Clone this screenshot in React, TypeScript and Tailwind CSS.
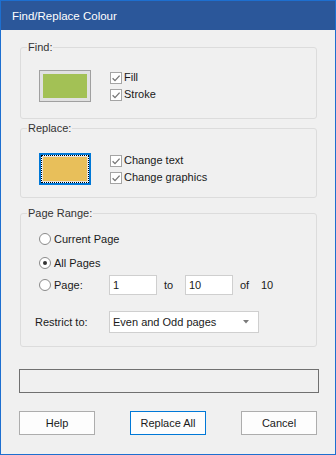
import React from "react";

function Check({ label }: { label: string }) {
  return (
    <div className="flex items-center h-[17px] gap-[2px]">
      <div className="w-[12px] h-[12px] border border-[#a4a4a4] bg-white flex items-center justify-center">
        <svg width="10" height="10" viewBox="0 0 10 10">
          <path d="M1.6 5.2 L4 7.6 L8.6 2.6" fill="none" stroke="#767676" strokeWidth="1.3" />
        </svg>
      </div>
      <span>{label}</span>
    </div>
  );
}

function Radio({ checked }: { checked?: boolean }) {
  return (
    <div className="w-[12px] h-[12px] rounded-full border border-[#8a8a8a] bg-white flex items-center justify-center">
      {checked && <div className="w-[4px] h-[4px] rounded-full bg-[#333333]" />}
    </div>
  );
}

function Group({ label, className, children }: { label: string; className: string; children: React.ReactNode }) {
  return (
    <div className={"relative ml-[19px] w-[297px] border border-[#dcdcdc] rounded-[3px] " + className}>
      <span className="absolute left-[6px] top-[-8px] leading-[14px] bg-[#f0f0f0] px-[1px] text-[#333333]">{label}</span>
      {children}
    </div>
  );
}

export default function App() {
  return (
    <div className="w-[336px] h-[455px] border border-[#1d6fd0] bg-[#f0f0f0] flex flex-col font-['Liberation_Sans',Arial,sans-serif] text-[11px] text-[#1a1a1a]">
      <div className="h-[29px] shrink-0 bg-[#2b579a] text-white text-[11.5px] pl-[11px] pt-[2px] flex items-center">
        Find/Replace Colour
      </div>
      <div className="flex flex-col">
        <Group label="Find:" className="mt-[17px] h-[72px] pl-[18px] pt-[21px]">
          <div className="flex items-center">
            <div className="w-[52px] h-[32px] border border-[#a0a0a0] bg-[#e1e1e1] p-[3px]">
              <div className="w-full h-full bg-[#a3c155]" />
            </div>
            <div className="flex flex-col ml-[19px]">
              <Check label="Fill" />
              <Check label="Stroke" />
            </div>
          </div>
        </Group>

        <Group label="Replace:" className="mt-[9px] h-[70px] pl-[18px] pt-[23px]">
          <div className="flex items-center">
            <div className="w-[52px] h-[32px] border-2 border-[#0078d7]">
              <div className="w-full h-full border border-dotted border-black bg-white">
                <div className="w-full h-full bg-[#e1e1e1] p-[1px]">
                  <div className="w-full h-full bg-[#e8bf5a]" />
                </div>
              </div>
            </div>
            <div className="flex flex-col ml-[19px]">
              <Check label="Change text" />
              <Check label="Change graphics" />
            </div>
          </div>
        </Group>

        <Group label="Page Range:" className="mt-[15px] h-[134px] pl-[14px] pt-[15px]">
          <div className="flex flex-col">
            <div className="flex items-center h-[20px] ml-[4px] gap-[3px]">
              <Radio />
              <span>Current Page</span>
            </div>
            <div className="flex items-center h-[20px] ml-[4px] gap-[3px] mt-[4px]">
              <Radio checked />
              <span>All Pages</span>
            </div>
            <div className="flex items-center h-[20px] mt-[2px]">
              <div className="flex items-center w-[74px] pl-[4px] gap-[3px]">
                <Radio />
                <span>Page:</span>
              </div>
              <div className="w-[48px] h-[20px] border border-[#cfcfcf] bg-white flex items-center pl-[3px]">1</div>
              <span className="ml-[7px] w-[21px]">to</span>
              <div className="w-[48px] h-[20px] border border-[#cfcfcf] bg-white flex items-center pl-[3px]">10</div>
              <span className="ml-[7px] w-[21px]">of</span>
              <span>10</span>
            </div>
            <div className="flex items-center h-[22px] mt-[16px]">
              <span className="w-[74px]">Restrict to:</span>
              <div className="w-[150px] h-[22px] border border-[#cfcfcf] bg-white flex items-center pl-[3px] pr-[9px] justify-between">
                <span>Even and Odd pages</span>
                <svg width="6" height="4" viewBox="0 0 6 4">
                  <path d="M0 0 L6 0 L3 3.5 Z" fill="#7a7a7a" />
                </svg>
              </div>
            </div>
          </div>
        </Group>

        <div className="ml-[18px] mt-[22px] w-[300px] h-[24px] border border-[#707070]" />

        <div className="flex ml-[18px] mt-[18px] gap-[35px]">
          <button className="w-[76px] h-[24px] border border-[#adadad] bg-[#fdfdfd] text-[11px]">Help</button>
          <button className="w-[76px] h-[24px] border border-[#0078d7] bg-[#fdfdfd] text-[11px]">Replace All</button>
          <button className="w-[76px] h-[24px] border border-[#adadad] bg-[#fdfdfd] text-[11px]">Cancel</button>
        </div>
      </div>
    </div>
  );
}
